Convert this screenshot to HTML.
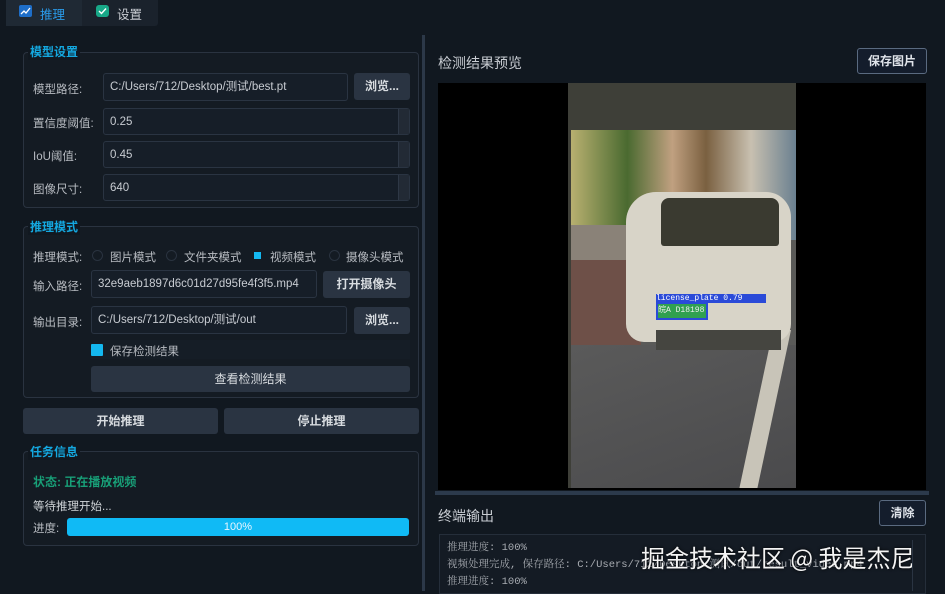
<!DOCTYPE html>
<html><head><meta charset="utf-8"><style>
*{margin:0;padding:0;box-sizing:border-box}
body{width:945px;height:591px;overflow:hidden;background:#111820;font-family:"Liberation Sans","Noto Sans CJK SC",sans-serif;color:#c8ccd2;font-size:12px;position:relative}
.a{position:absolute}
.grp{position:absolute;border:1px solid #2a3340;border-radius:4px;background:#141b23}
.gt{position:absolute;color:#14a8e0;font-size:12px;font-weight:bold;background:#111820;padding:0 2px}
.inp{position:absolute;background:#161e28;border:1px solid #2a3442;border-radius:3px;color:#c8ccd2;padding-left:6px;line-height:26px;font-size:11.5px;white-space:nowrap;overflow:hidden}
.btn{position:absolute;background:#2a3442;border-radius:3px;color:#d8dce0;text-align:center;font-size:12px;font-weight:bold}
.lbl{position:absolute;font-size:11.5px;color:#b8bcc2}
.spin{position:absolute;width:11px;background:#222a35;border-left:1px solid #2e3846}
.rad{position:absolute;width:11px;height:11px;border-radius:50%;border:1px solid #2a3340}
.tb{position:absolute;border:1px solid #5a6a80;border-radius:3px;background:#141d2c;color:#e0e4ea;font-weight:bold;font-size:12px;text-align:center}
</style></head><body>
<div class="a" style="left:6px;top:0;width:152px;height:26px;background:#1a222c;border-radius:0 0 3px 3px"></div>
<div class="a" style="left:6px;top:0;width:76px;height:26px;background:#1f2934"></div>
<div class="a" style="left:19px;top:5px;width:13px;height:12px;background:#1e6ec8;border-radius:2px"></div>
<svg class="a" style="left:19px;top:5px" width="13" height="12"><path d="M2 9 L5 6 L7 8 L11 3" stroke="#fff" stroke-width="1.3" fill="none"/></svg>
<div class="a" style="left:40px;top:4px;color:#2a9ae8;font-size:12.5px">推理</div>
<div class="a" style="left:96px;top:5px;width:13px;height:12px;background:#18a888;border-radius:3px"></div>
<svg class="a" style="left:96px;top:5px" width="13" height="12"><path d="M3 6 L5.5 8.5 L10 3.5" stroke="#fff" stroke-width="1.4" fill="none"/></svg>
<div class="a" style="left:117px;top:4px;color:#c8ccd2;font-size:12.5px">设置</div>

<div class="grp" style="left:23px;top:52px;width:396px;height:156px"></div>
<div class="gt" style="left:28px;top:43px">模型设置</div>
<div class="lbl" style="left:33px;top:81px">模型路径:</div>
<div class="inp" style="left:103px;top:73px;width:245px;height:28px">C:/Users/712/Desktop/测试/best.pt</div>
<div class="btn" style="left:354px;top:73px;width:56px;height:27px;line-height:27px">浏览...</div>
<div class="lbl" style="left:33px;top:115px">置信度阈值:</div>
<div class="inp" style="left:103px;top:108px;width:307px;height:27px">0.25</div><div class="spin" style="left:398px;top:109px;height:25px"></div>
<div class="lbl" style="left:33px;top:148px">IoU阈值:</div>
<div class="inp" style="left:103px;top:141px;width:307px;height:27px">0.45</div><div class="spin" style="left:398px;top:142px;height:25px"></div>
<div class="lbl" style="left:33px;top:181px">图像尺寸:</div>
<div class="inp" style="left:103px;top:174px;width:307px;height:27px">640</div><div class="spin" style="left:398px;top:175px;height:25px"></div>

<div class="grp" style="left:23px;top:226px;width:396px;height:172px"></div>
<div class="gt" style="left:28px;top:218px">推理模式</div>
<div class="lbl" style="left:33px;top:249px">推理模式:</div>
<div class="rad" style="left:92px;top:250px"></div><div class="lbl" style="left:110px;top:249px">图片模式</div>
<div class="rad" style="left:166px;top:250px"></div><div class="lbl" style="left:184px;top:249px">文件夹模式</div>
<div class="a" style="left:254px;top:252px;width:7px;height:7px;background:#14b8f0"></div><div class="lbl" style="left:270px;top:249px">视频模式</div>
<div class="rad" style="left:329px;top:250px"></div><div class="lbl" style="left:346px;top:249px">摄像头模式</div>
<div class="lbl" style="left:33px;top:278px">输入路径:</div>
<div class="inp" style="left:91px;top:270px;width:226px;height:28px">32e9aeb1897d6c01d27d95fe4f3f5.mp4</div>
<div class="btn" style="left:323px;top:271px;width:87px;height:27px;line-height:27px">打开摄像头</div>
<div class="lbl" style="left:33px;top:314px">输出目录:</div>
<div class="inp" style="left:91px;top:306px;width:256px;height:28px">C:/Users/712/Desktop/测试/out</div>
<div class="btn" style="left:354px;top:307px;width:56px;height:27px;line-height:27px">浏览...</div>
<div class="a" style="left:91px;top:340px;width:319px;height:19px;background:#151d26"></div>
<div class="a" style="left:91px;top:344px;width:12px;height:12px;background:#14b8f0;border-radius:1px"></div>
<div class="lbl" style="left:110px;top:343px">保存检测结果</div>
<div class="btn" style="left:91px;top:366px;width:319px;height:26px;line-height:26px;font-weight:normal">查看检测结果</div>

<div class="btn" style="left:23px;top:408px;width:195px;height:26px;line-height:26px">开始推理</div>
<div class="btn" style="left:224px;top:408px;width:195px;height:26px;line-height:26px">停止推理</div>

<div class="grp" style="left:23px;top:451px;width:396px;height:95px"></div>
<div class="gt" style="left:28px;top:443px">任务信息</div>
<div class="a" style="left:33px;top:473px;color:#18a078;font-weight:bold;font-size:12px">状态: 正在播放视频</div>
<div class="lbl" style="left:33px;top:498px;color:#d0d4d8">等待推理开始...</div>
<div class="lbl" style="left:33px;top:520px">进度:</div>
<div class="a" style="left:67px;top:518px;width:342px;height:18px;background:#10baf5;border-radius:3px;text-align:center;line-height:18px;color:#e8f6ff;font-size:11px">100%</div>

<div class="a" style="left:422px;top:35px;width:3px;height:556px;background:#2c3848"></div>

<div class="a" style="left:438px;top:53px;font-size:14px;color:#c8ccd2">检测结果预览</div>
<div class="tb" style="left:857px;top:48px;width:70px;height:26px;line-height:24px">保存图片</div>
<div class="a" style="left:438px;top:83px;width:488px;height:407px;background:#000"></div>
<div class="a" style="left:568px;top:83px;width:228px;height:405px;background:#3e3f38"></div>
<div class="a" style="left:571px;top:130px;width:225px;height:358px;overflow:hidden;background:#5a5a58">
 <div class="a" style="left:0;top:0;width:225px;height:110px;background:linear-gradient(90deg,#b8b070 0%,#4a6a30 25%,#c0a080 45%,#7a6040 60%,#c8c0b0 80%,#6a8090 100%)"></div>
 <div class="a" style="left:0;top:95px;width:70px;height:40px;background:#8a8278"></div>
 <div class="a" style="left:0;top:130px;width:70px;height:110px;background:#6e5048"></div>
 <div class="a" style="left:0;top:215px;width:225px;height:145px;background:linear-gradient(160deg,#5a5a5a,#4a4a4c)"></div>
 <div class="a" style="left:185px;top:200px;width:18px;height:160px;background:#c8c4b8;transform:skewX(-12deg)"></div>
 <div class="a" style="left:55px;top:62px;width:165px;height:150px;background:#d8d4c8;border-radius:30px 25px 18px 18px"></div>
 <div class="a" style="left:90px;top:68px;width:118px;height:48px;background:#3a3a30;border-radius:8px 8px 3px 3px"></div>
 <div class="a" style="left:85px;top:200px;width:125px;height:20px;background:#454540"></div>
 <div class="a" style="left:85px;top:164px;width:110px;height:9px;background:#2a4ad8;color:#fff;font-size:8px;line-height:9px;font-family:'Liberation Mono',monospace;white-space:nowrap;overflow:hidden">license_plate 0.79</div>
 <div class="a" style="left:85px;top:172px;width:52px;height:18px;border:2px solid #2a4ad8;background:#30a050;color:#eee;font-size:8px;line-height:14px;font-family:'Liberation Mono',monospace;white-space:nowrap;overflow:hidden">皖A D18198</div>
</div>

<div class="a" style="left:435px;top:491px;width:494px;height:4px;background:#2c3a4c"></div>
<div class="a" style="left:438px;top:506px;font-size:14px;color:#c8ccd2">终端输出</div>
<div class="tb" style="left:879px;top:500px;width:47px;height:26px;line-height:24px">清除</div>
<div class="a" style="left:439px;top:534px;width:487px;height:60px;background:#141b24;border:1px solid #252e3a"></div>
<div class="a" style="left:447px;top:540px;font-size:10.5px;line-height:17px;color:#a8acb2;font-family:'Liberation Mono','Noto Serif CJK SC',monospace;white-space:nowrap">推理进度: 100%<br>视频处理完成, 保存路径: C:/Users/712/Desktop/测试/out/result_video.mp4<br>推理进度: 100%</div>
<div class="a" style="left:641px;top:539px;font-size:24px;color:#f4f4f4;text-shadow:0 0 3px #000;white-space:nowrap;font-family:'Noto Sans CJK SC',sans-serif">掘金技术社区 @ 我是杰尼</div>
<div class="a" style="left:912px;top:540px;width:11px;height:51px;border-left:1px solid #2a3442;background:#151c25"></div>
</body></html>
